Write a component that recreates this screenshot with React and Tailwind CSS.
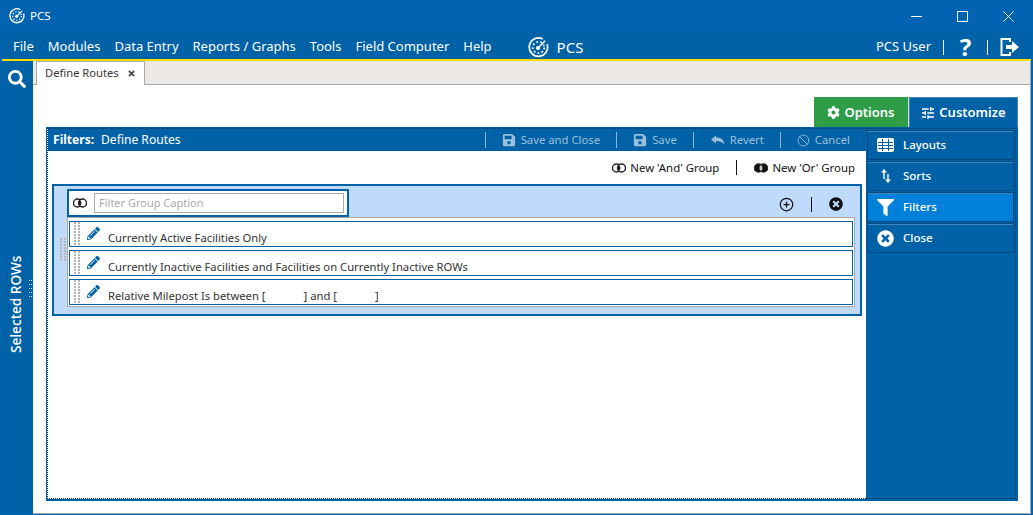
import { Ban, CirclePlus } from 'lucide-react';
import { FaCog, FaPencilAlt, FaSave, FaSearch, FaTimesCircle, FaFilter } from 'react-icons/fa';
import { MdTune } from 'react-icons/md';

const MENU = ['File', 'Modules', 'Data Entry', 'Reports / Graphs', 'Tools', 'Field Computer', 'Help'];
const RULES = [
  'Currently Active Facilities Only',
  'Currently Inactive Facilities and Facilities on Currently Inactive ROWs',
];

const Logo = ({ size }) => (
  <svg width={size} height={size} viewBox="0 0 22 22" fill="none" stroke="white" className="shrink-0">
    <path d="M15.5 2.2A9.6 9.6 0 1 0 20 7.5" strokeWidth="1.8" />
    <circle cx="11" cy="11" r="6" strokeWidth="1.8" strokeDasharray="1.8 2.4" />
    <circle cx="10.5" cy="11.5" r="2.2" fill="white" stroke="none" />
    <path d="M11 11l7-7" strokeWidth="1.6" />
  </svg>
);

// And: white crescents around a dark lens. Or: dark crescents around a white lens
const Venn = ({ or }) => (
  <svg width="14" height="10" viewBox="0 0 14 10" className="shrink-0">
    <circle cx="4.5" cy="5" r="4" fill={or ? '#111' : '#fff'} stroke="#222" strokeWidth="1.4" />
    <circle cx="9.5" cy="5" r="4" fill={or ? '#111' : '#fff'} stroke="#222" strokeWidth="1.4" />
    <path d="M7 1.900A4 4 0 0 1 7 8.100A4 4 0 0 1 7 1.900z" fill={or ? '#ccc' : '#222'} />
  </svg>
);

const Grip = ({ className }) => (
  <div className={`grid grid-cols-2 gap-x-[2px] gap-y-[1px] w-[6px] ${className}`}>
    {Array.from({ length: 16 }).map((_, i) => (
      <span key={i} className="w-[2px] h-[2px] bg-[#b4b4b4]" />
    ))}
  </div>
);

const ToolbarAction = ({ icon, label, className }) => (
  <div className={`flex items-center gap-[5px] border-l border-[#8fb8d8] h-[16px] ${className}`}>
    {icon}
    <span>{label}</span>
  </div>
);

const RuleRow = ({ children }) => (
  <div className="h-[26px] border border-[#0063a8] bg-white flex relative shrink-0">
    <Grip className="absolute left-[4px] top-0" />
    <FaPencilAlt size={13} color="#0063a8" className="absolute left-[17px] top-[5px]" />
    <span className="ml-[38px] mt-[8px] text-[11.25px] leading-[16px] text-[#333]">{children}</span>
  </div>
);

const SideButton = ({ icon, label, active }) => (
  <div className={`h-[30px] flex items-center border border-[#04497f] shadow-[inset_0_1px_0_#3d86bd] ${active ? 'bg-[#0080d8]' : 'bg-[#0062a6]'}`}>
    <span className="w-[35px] flex justify-center">{icon}</span>
    <span className="text-[11.5px] font-medium text-white">{label}</span>
  </div>
);

const App = () => {
  return (
    <div className="w-[1033px] h-[515px] overflow-hidden flex flex-col bg-[#0063b1] border border-[#0063b1] text-white font-['Noto_Sans','Open_Sans',sans-serif]">
      <div className="h-[30px] shrink-0 flex items-center pl-[8px]">
        <Logo size={16} />
        <span className="ml-[5px] text-[11.5px]">PCS</span>
        <div className="ml-auto flex items-center pr-[18px]">
          <span className="w-[11px] h-px bg-white" />
          <span className="ml-[35px] w-[11px] h-[11px] border border-white" />
          <svg width="11" height="11" viewBox="0 0 11 11" stroke="white" className="ml-[35px]">
            <path d="M.5.5l10 10M10.5.5l-10 10" />
          </svg>
        </div>
      </div>

      <div className="h-[28px] shrink-0 bg-[#0062a6] flex items-center pl-[12px] pr-[12px] pt-[4px] text-[13px]">
        <div className="flex gap-[14px]">
          {MENU.map((item) => (
            <span key={item}>{item}</span>
          ))}
        </div>
        <div className="ml-[36px] flex items-center gap-[8px]">
          <Logo size={21} />
          <span className="text-[15px]">PCS</span>
        </div>
        <div className="ml-auto flex items-center">
          <span className="text-[13px]">PCS User</span>
          <span className="w-px h-[15px] bg-white ml-[12px]" />
          <span className="w-[43px] text-center text-[24px] font-bold leading-none">?</span>
          <span className="w-px h-[15px] bg-white" />
          <svg width="20" height="20" viewBox="0 0 20 20" fill="none" className="ml-[12px]">
            <path d="M10 5V2H1.500v16H10v-3" stroke="white" strokeWidth="2" />
            <path d="M6 8h6V4l7 6-7 6v-4H6z" fill="white" />
          </svg>
        </div>
      </div>
      <div className="h-[2px] shrink-0 ml-px mr-px bg-[#ffdc00]" />

      <div className="flex-1 flex min-h-0">
        <div className="w-[32px] shrink-0 flex flex-col items-center bg-[#0062a6] relative">
          <FaSearch size={18} className="mt-[9px]" />
          <div className="absolute left-0 top-[193px] w-[31px] h-[100px] flex items-center justify-center">
            <span className="-rotate-90 whitespace-nowrap text-[13.7px] font-medium">Selected ROWs</span>
          </div>
          <div className="absolute left-[28px] top-[219px] grid grid-cols-2 gap-x-px gap-y-[3px]">
            {Array.from({ length: 10 }).map((_, i) => (
              <span key={i} className="w-px h-px bg-[#d5e6f3]" />
            ))}
          </div>
        </div>

        <div className="flex-1 flex flex-col bg-white mr-px border-r border-b border-[#aaa]">
          <div className="h-[24px] shrink-0 bg-[#ece8e6] border-b border-[#aaa] flex pl-[3px]">
            <div className="w-[109px] h-[24px] bg-white border border-b-0 border-[#aaa] flex items-center pl-[8px] text-[#3b3333] text-[11.2px]">
              Define Routes
              <svg width="7" height="7" viewBox="0 0 8 8" stroke="#444" strokeWidth="1.8" className="ml-[9px]">
                <path d="M1 1l6 6M7 1l-6 6" />
              </svg>
            </div>
          </div>

          <div className="flex-1 flex flex-col items-end pl-[13px] pr-[12px] pt-[12px] pb-[12px] min-h-0">
            <div className="flex h-[30px] shrink-0 text-[13px] font-semibold">
              <div className="w-[95px] pt-px flex items-center justify-center gap-[4px] bg-[#2f9c48] border-r border-[#cde]">
                <FaCog size={13} />
                Options
              </div>
              <div className="w-[109px] pr-px flex items-center justify-center gap-[3px] bg-[#0062a6] border border-b-0 border-[#3d86bd]">
                <MdTune size={16} />
                Customize
              </div>
            </div>

            <div className="w-[972px] flex-1 flex min-h-0 border-t border-l border-r-2 border-b-2 border-[#0062a6] bg-white">
              <div className="flex-1 flex flex-col border-l border-b border-dotted border-[#0a3a66]">
                <div className="h-[23px] shrink-0 bg-[#0062a6] border-t border-dotted border-[#0a3a66] flex items-center pl-[5px] text-[12.1px]">
                  <span className="font-bold w-[48px]">Filters:</span>
                  <span>Define Routes</span>
                  <div className="ml-auto flex items-center pr-[16px] text-[#9cc0dc] text-[11.3px]">
                    <ToolbarAction className="pl-[16px] pr-[16px]" label="Save and Close" icon={<FaSave size={14} />} />
                    <ToolbarAction className="pl-[16px] pr-[16px]" label="Save" icon={<FaSave size={14} />} />
                    <ToolbarAction
                      className="pl-[17px] pr-[16px]"
                      label="Revert"
                      icon={
                        <svg width="14" height="10" viewBox="0 0 14 10" fill="#9cc0dc">
                          <path d="M5 .5L0 4.500 5 8.500V6c3.500 0 6 .5 8.500 3.500C13 5 10 2.500 5 2.500z" />
                        </svg>
                      }
                    />
                    <ToolbarAction className="pl-[16px]" label="Cancel" icon={<Ban size={13} strokeWidth={1.6} />} />
                  </div>
                </div>

                <div className="h-[33px] shrink-0 flex items-center justify-end pr-[11px] text-[11.4px] text-[#111]">
                  <Venn />
                  <span className="ml-[4px]">New 'And' Group</span>
                  <span className="w-px h-[15px] bg-[#111] mx-[17px]" />
                  <Venn or />
                  <span className="ml-[4px]">New 'Or' Group</span>
                </div>

                <div className="mx-[4px] h-[132px] border-[2px] border-[#0063a8] bg-[#bfdafb] relative">
                  <div className="ml-[13px] mt-[3px] w-[282px] h-[28px] bg-white border-[2px] border-[#0063a8] flex items-center pl-[4px]">
                    <Venn />
                    <div className="ml-[7px] w-[250px] h-[20px] border border-[#aaa] flex items-center pl-[4px] text-[11px] text-[#aaa]">Filter Group Caption</div>
                  </div>
                  <div className="absolute right-[17px] top-[5px] h-[26px] flex items-center text-[#111]">
                    <CirclePlus size={15} />
                    <span className="w-px h-[15px] bg-[#111] mx-[17px]" />
                    <FaTimesCircle size={14} color="#111" />
                  </div>
                  <Grip className="absolute left-[6px] top-[52px]" />
                  <div className="ml-[13px] mr-[5px] h-[90px] border border-[#aaa] bg-white px-[1px] pt-[3px] flex flex-col gap-[3px]">
                    {RULES.map((rule) => (
                      <RuleRow key={rule}>{rule}</RuleRow>
                    ))}
                    <RuleRow>
                      Relative Milepost Is between [<span className="inline-block w-[38px]" />] and [<span className="inline-block w-[38px]" />]
                    </RuleRow>
                  </div>
                </div>
              </div>

              <div className="w-[150px] shrink-0 bg-[#0062a6] border-t border-r border-b border-dotted border-[#0a3a66] pt-px px-px flex flex-col gap-px">
                <SideButton
                  label="Layouts"
                  icon={
                    <svg width="17" height="14" viewBox="0 0 17 14" fill="none">
                      <rect width="17" height="14" rx="2" fill="white" />
                      <path d="M5.500 1v12M11.500 1v12M1 4.500h15M1 7.500h15M1 10.500h15" stroke="#0062a6" />
                    </svg>
                  }
                />
                <SideButton
                  label="Sorts"
                  icon={
                    <svg width="12" height="14" viewBox="0 0 12 14" fill="white">
                      <path d="M3.300 10V3h1.400v7zM1 3.500L4 0l3 3.500zM7.300 5h1.400v6H7.300zM5 10.500h6L8 14z" />
                    </svg>
                  }
                />
                <SideButton active label="Filters" icon={<FaFilter size={17} />} />
                <SideButton label="Close" icon={<FaTimesCircle size={17} />} />
              </div>
            </div>
          </div>
        </div>
      </div>
    </div>
  );
};

export default App;
